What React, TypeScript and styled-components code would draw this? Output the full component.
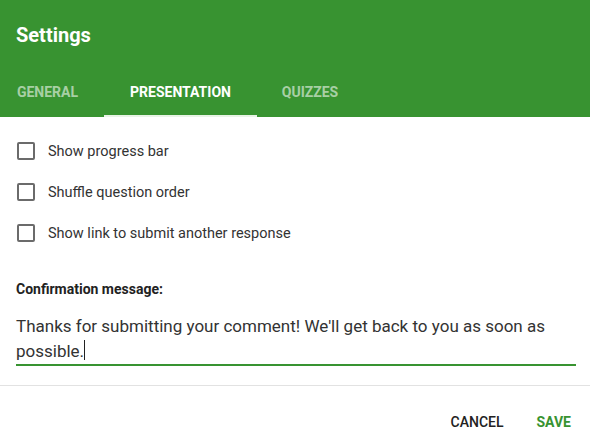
import React from 'react';
import styled, { createGlobalStyle } from 'styled-components';

const GlobalStyle = createGlobalStyle`
  html, body {
    margin: 0;
    padding: 0;
    background: #ffffff;
    font-family: Roboto, 'Liberation Sans', Arial, sans-serif;
  }
`;

const Dialog = styled.div`
  width: 590px;
  height: 446px;
  display: flex;
  flex-direction: column;
  background: #fff;
`;

const Header = styled.div`
  background-color: #389331;
  color: #fff;
  height: 117px;
  display: flex;
  flex-direction: column;
  justify-content: space-between;
`;

const Title = styled.h1`
  margin: 0;
  padding: 24px 16px 0;
  font-size: 20px;
  font-weight: 700;
  line-height: 22px;
`;

const TabBar = styled.div`
  display: flex;
`;

const Tab = styled.div<{ active?: boolean; w: number; shift?: number }>`
  width: ${p => p.w}px;
  height: 50px;
  box-sizing: border-box;
  display: flex;
  align-items: center;
  justify-content: center;
  font-size: 14px;
  font-weight: 700;
  text-transform: uppercase;
  color: ${p => (p.active ? '#ffffff' : 'rgba(255, 255, 255, 0.58)')};
  border-bottom: 2px solid ${p => (p.active ? '#e8f3e6' : 'transparent')};
  padding-top: 1px;
  padding-right: ${p => p.shift || 0}px;
`;

const Body = styled.div`
  padding: 25px 16px 0;
  display: flex;
  flex-direction: column;
`;

const OptionList = styled.div`
  display: flex;
  flex-direction: column;
  gap: 23px;
`;

const Option = styled.label`
  display: flex;
  align-items: center;
  gap: 13px;
  padding-left: 1px;
  height: 18px;
  font-size: 14.5px;
  color: #333;
`;

const Box = styled.span`
  width: 18px;
  height: 18px;
  box-sizing: border-box;
  border: 2px solid #6b6b6b;
  border-radius: 2px;
`;

const FieldLabel = styled.div`
  margin-top: 39px;
  font-size: 14px;
  font-weight: 700;
  color: #222;
`;

const Message = styled.div`
  margin-top: 17px;
  font-size: 17px;
  line-height: 25px;
  color: #333;
  border-bottom: 2px solid #389331;
  margin-right: -2px;
`;

const Caret = styled.span`
  display: inline-block;
  width: 1px;
  height: 20px;
  background: #222;
  vertical-align: -3px;
`;

const Divider = styled.div`
  margin-top: 19px;
  height: 1px;
  background: #e2e2e2;
`;

const Actions = styled.div`
  display: flex;
  justify-content: flex-end;
  gap: 33px;
  padding: 28px 19px 0;
`;

const ActionButton = styled.button<{ primary?: boolean }>`
  border: none;
  background: none;
  padding: 0;
  font-family: inherit;
  font-size: 14px;
  font-weight: ${p => (p.primary ? 700 : 500)};
  color: ${p => (p.primary ? '#389331' : '#222')};
  text-transform: uppercase;
`;

const options = [
  'Show progress bar',
  'Shuffle question order',
  'Show link to submit another response',
];

const App: React.FC = () => (
  <>
    <GlobalStyle />
    <Dialog>
      <Header>
        <Title>Settings</Title>
        <TabBar>
          <Tab w={104} shift={9}>General</Tab>
          <Tab w={153} active>Presentation</Tab>
          <Tab w={106}>Quizzes</Tab>
        </TabBar>
      </Header>
      <Body>
        <OptionList>
          {options.map(o => (
            <Option key={o}>
              <Box />
              {o}
            </Option>
          ))}
        </OptionList>
        <FieldLabel>Confirmation message:</FieldLabel>
        <Message>
          Thanks for submitting your comment! We'll get back to you as soon as possible.
          <Caret />
        </Message>
      </Body>
      <Divider />
      <Actions>
        <ActionButton>Cancel</ActionButton>
        <ActionButton primary>Save</ActionButton>
      </Actions>
    </Dialog>
  </>
);

export default App;
